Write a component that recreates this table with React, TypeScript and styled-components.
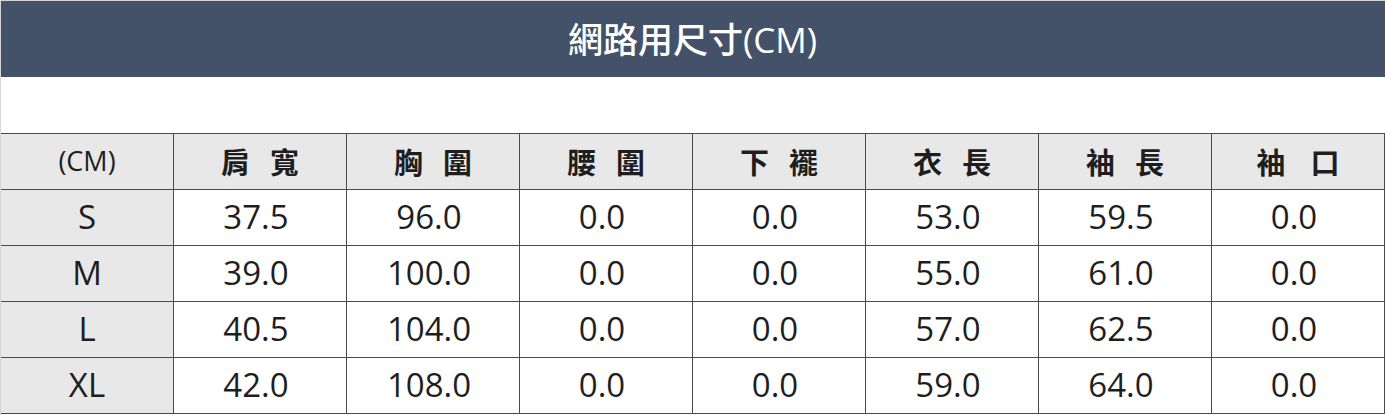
import { createGlobalStyle } from "styled-components"
import styled from "styled-components"

const Global = createGlobalStyle`
  body {
    margin      : 0 ;
    background  : white ;
    font-family : "Open Sans", "Noto Sans CJK TC", sans-serif ;
  }
`

const Page = styled.div`
  width       : 1385px ;
  height      : 415px  ;
  box-sizing  : border-box ;
  border-top  : 1px solid #d6d6d6 ;
  border-left : 1px solid #d6d6d6 ;
  overflow    : hidden ;
`

const Banner = styled.div`
  height          : 76px ;
  background      : #435269 ;
  color           : white ;
  display         : flex ;
  justify-content : center ;
  align-items     : center ;
  font-size       : 35px ;
  font-weight     : 500 ;
  margin-left     : -1px ;
  padding-bottom  : 4px ;
  box-sizing      : border-box ;
`

const Gap = styled.div`
  height : 56px ;
`

const Grid = styled.div`
  display               : grid ;
  grid-template-columns : repeat(8, 173px) ;
  grid-auto-rows        : 56px ;
  border-top            : 1px solid #4a4a4a ;
  border-left           : 1px solid #4a4a4a ;
  margin-left           : -1px ;
`

const Cell = styled.div<{ $shade?: boolean; $shift?: boolean }>`
  box-sizing      : border-box ;
  border-right    : 1px solid #4a4a4a ;
  border-bottom   : 1px solid #4a4a4a ;
  background      : ${p => (p.$shade ? "#e8e8e8" : "white")} ;
  color           : #1e1e1e ;
  display         : flex ;
  justify-content : center ;
  align-items     : center ;
  font-size       : 33px ;
  font-weight     : 500 ;
  padding-right   : ${p => (p.$shift ? "8px" : "0")} ;
  padding-bottom  : 2px ;
`

const HeadCell = styled(Cell)<{ $spread: number }>`
  font-size      : 29px ;
  font-weight    : 700 ;
  letter-spacing : ${p => p.$spread}px ;
  text-indent    : ${p => p.$spread}px ;
`

const UnitCell = styled(Cell)`
  font-size : 27px ;
`

const heads: [string, number][] = [
  ["肩寬", 20],
  ["胸圍", 20],
  ["腰圍", 20],
  ["下襬", 20],
  ["衣長", 20],
  ["袖長", 20],
  ["袖口", 25],
]

const rows: string[][] = [
  ["S", "37.5", "96.0", "0.0", "0.0", "53.0", "59.5", "0.0"],
  ["M", "39.0", "100.0", "0.0", "0.0", "55.0", "61.0", "0.0"],
  ["L", "40.5", "104.0", "0.0", "0.0", "57.0", "62.5", "0.0"],
  ["XL", "42.0", "108.0", "0.0", "0.0", "59.0", "64.0", "0.0"],
]

export default function App() {
  return (
    <Page>
      <Global />
      <Banner>網路用尺寸(CM)</Banner>
      <Gap />
      <Grid>
        <UnitCell $shade>(CM)</UnitCell>
        {heads.map(([h, s]) => (
          <HeadCell key={h} $shade $spread={s}>
            {h}
          </HeadCell>
        ))}
        {rows.map(r =>
          r.map((v, i) => (
            <Cell key={r[0] + i} $shade={i === 0} $shift={i > 0}>
              {v}
            </Cell>
          ))
        )}
      </Grid>
    </Page>
  )
}
